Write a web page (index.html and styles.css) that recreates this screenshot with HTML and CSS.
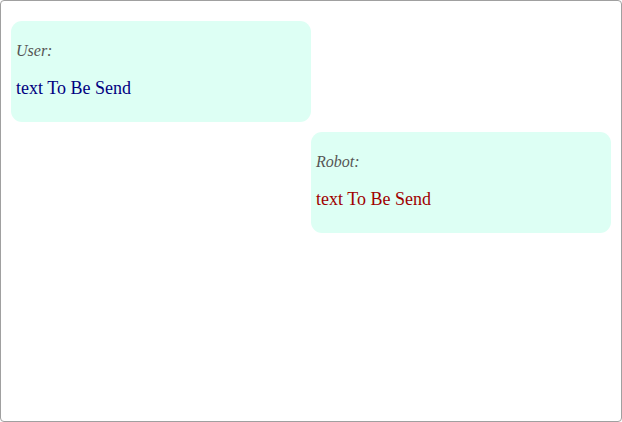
FILE: index.html
```html
<!DOCTYPE html>
<html>
<head>
<meta charset="utf-8">
<link rel="stylesheet" href="styles.css">
</head>
<body>
<div class="frame">
  <div class="bubble user">
    <p class="who">User:</p>
    <p class="msg">text To Be Send</p>
  </div>
  <div class="bubble robot">
    <p class="who">Robot:</p>
    <p class="msg">text To Be Send</p>
  </div>
</div>
</body>
</html>
```
FILE: styles.css
```css
html, body {
  margin: 0;
  padding: 0;
  background: #fff;
}
.frame {
  box-sizing: border-box;
  width: 622px;
  height: 422px;
  border: 1px solid #a0a0a0;
  border-radius: 4px;
  padding: 20px 10px 10px 10px;
  display: flex;
  flex-direction: column;
  gap: 10px;
  font-family: "Liberation Serif", "Times New Roman", serif;
}
.bubble {
  box-sizing: border-box;
  width: 300px;
  height: 101px;
  padding: 0 5px;
  background: #ddfff4;
  border-radius: 11px;
  overflow: hidden;
}
.robot {
  align-self: flex-end;
}
.who {
  margin: 21px 0 0 0;
  font-style: italic;
  font-size: 16px;
  color: #555;
}
.msg {
  margin: 18px 0 0 0;
  font-size: 18px;
}
.user .msg { color: #000080; }
.robot .msg { color: #a00000; }
```
